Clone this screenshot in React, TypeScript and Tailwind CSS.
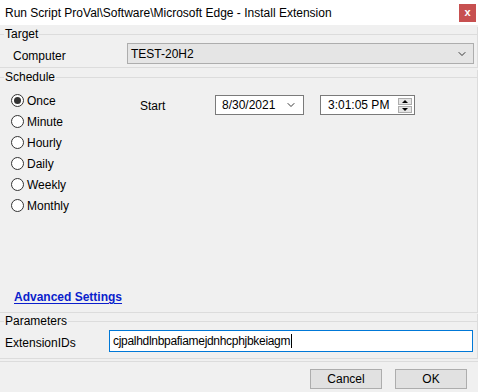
import { ChevronDown } from "lucide-react";

const FONT = "font-['Liberation_Sans',Arial,sans-serif]";

const FREQUENCIES = ["Once", "Minute", "Hourly", "Daily", "Weekly", "Monthly"];

function GroupHeader({ label }: { label: string }) {
  return (
    <div className="flex h-[14px] items-center">
      <div className="h-px w-[4px] bg-[#dcdcdc]" />
      <span className="px-[1px] leading-[14px]">{label}</span>
      <div className="h-px flex-1 bg-[#dcdcdc]" />
    </div>
  );
}

function Radio({ label, checked }: { label: string; checked?: boolean }) {
  return (
    <div className="flex h-[21px] items-center gap-[3px]">
      <span className="flex h-[13px] w-[13px] items-center justify-center rounded-full border border-[#333] bg-white">
        {checked && <span className="h-[7px] w-[7px] rounded-full bg-[#333]" />}
      </span>
      <span>{label}</span>
    </div>
  );
}

export default function App() {
  return (
    <div className={`${FONT} flex h-[392px] w-[478px] flex-col overflow-hidden bg-[#f0f0f0] text-[12px] text-black`}>
      <div className="flex h-[25px] items-center justify-between bg-white pl-[5px] pr-[2px]">
        <span className="text-[12px]">Run Script ProVal\Software\Microsoft Edge - Install Extension</span>
        <div className="flex h-[18px] w-[17px] items-center justify-center bg-[#c75050] text-[11px] font-bold leading-none text-white">
          x
        </div>
      </div>

      {/* Target */}
      <div className="mt-[2px] h-[41px] border-r border-b border-[#dcdcdc]">
        <GroupHeader label="Target" />
        <div className="mt-[2px] flex h-[21px] items-center">
          <span className="w-[127px] pl-[13px] pt-[4px]">Computer</span>
          <div className="flex h-[21px] w-[347px] items-center justify-between border border-[#adadad] bg-[#e5e5e5] pl-[3px] pr-[5px]">
            <span>TEST-20H2</span>
            <ChevronDown size={12} strokeWidth={1.8} className="text-[#222]" />
          </div>
        </div>
      </div>

      {/* Schedule */}
      <div className="mt-[2px] flex h-[243px] flex-col border-r border-b border-[#dcdcdc]">
        <GroupHeader label="Schedule" />
        <div className="flex">
          <div className="mt-[6px] flex w-[140px] flex-col pl-[11px]">
            {FREQUENCIES.map((f) => (
              <Radio key={f} label={f} checked={f === "Once"} />
            ))}
          </div>
          <div className="mt-[11px] flex h-[20px] items-center">
            <span className="w-[75px] pt-[2px]">Start</span>
            <div className="flex h-[20px] w-[89px] items-center justify-between border border-[#7a7a7a] bg-white pl-[6px] pr-[6px]">
              <span>8/30/2021</span>
              <ChevronDown size={12} strokeWidth={1.8} className="text-[#222]" />
            </div>
            <div className="ml-[16px] flex h-[20px] w-[95px] items-center justify-between border border-[#7a7a7a] bg-white pl-[7px] pr-[2px]">
              <span>3:01:05 PM</span>
              <div className="flex flex-col gap-px">
                <div className="flex h-[7px] w-[14px] items-center justify-center border border-[#adadad] bg-[#e5e5e5]">
                  <span className="h-0 w-0 border-x-[3px] border-b-[3px] border-x-transparent border-b-black" />
                </div>
                <div className="flex h-[7px] w-[14px] items-center justify-center border border-[#adadad] bg-[#e5e5e5]">
                  <span className="h-0 w-0 border-x-[3px] border-t-[3px] border-x-transparent border-t-black" />
                </div>
              </div>
            </div>
          </div>
        </div>
        <div className="mt-auto mb-[6px] pl-[14px]">
          <span className="font-bold text-[#0a1ecc] underline underline-offset-2">Advanced Settings</span>
        </div>
      </div>

      {/* Parameters */}
      <div className="mt-px h-[45px] border-r border-b border-[#dcdcdc]">
        <GroupHeader label="Parameters" />
        <div className="mt-[2px] flex h-[22px] items-center">
          <span className="w-[109px] pl-[5px] pt-[3px]">ExtensionIDs</span>
          <div className="flex h-[22px] w-[364px] items-center border border-[#0078d7] bg-white pl-[3px]">
            <span className="tracking-[-0.3px]">cjpalhdlnbpafiamejdnhcphjbkeiagm</span>
            <span className="ml-px h-[14px] w-px bg-black" />
          </div>
        </div>
      </div>

      <div className="mt-[2px] h-px bg-[#dcdcdc]" />

      <div className="mt-[7px] flex justify-end gap-[13px] pr-[11px]">
        <button type="button" className="h-[20px] w-[72px] border border-[#adadad] bg-[#e1e1e1] text-[12px]">
          Cancel
        </button>
        <button type="button" className="h-[20px] w-[72px] border border-[#adadad] bg-[#e1e1e1] text-[12px]">
          OK
        </button>
      </div>
    </div>
  );
}
